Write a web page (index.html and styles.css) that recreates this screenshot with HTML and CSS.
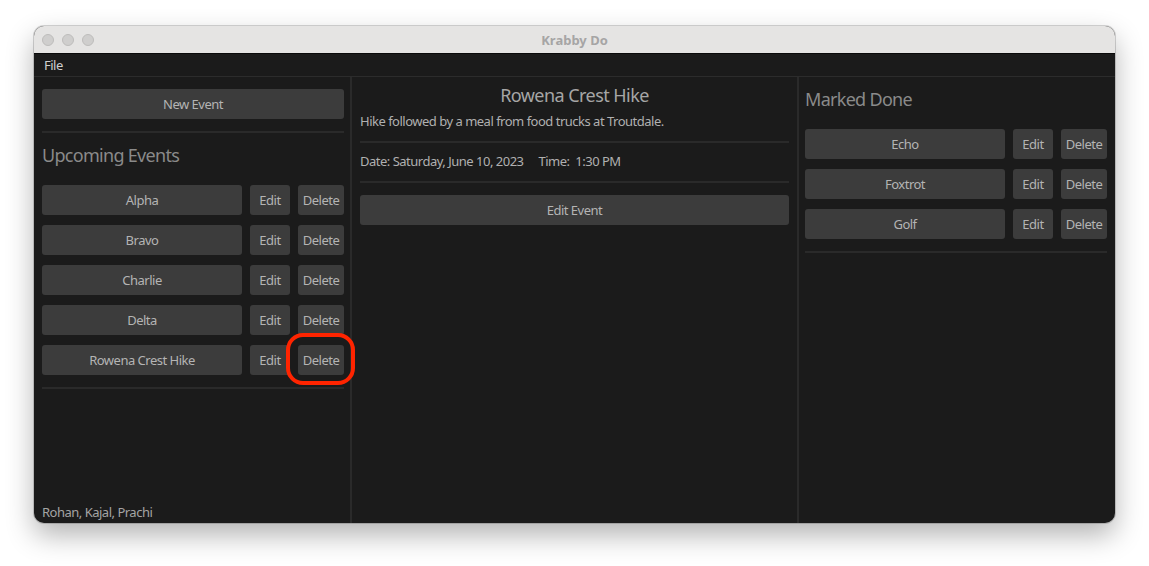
FILE: index.html
```html
<!DOCTYPE html>
<html>
<head>
<meta charset="utf-8">
<title>Krabby Do</title>
<link rel="stylesheet" href="styles.css">
</head>
<body>
<div class="window">
  <div class="titlebar">
    <div class="lights"><span class="light"></span><span class="light"></span><span class="light"></span></div>
    <div class="title">Krabby Do</div>
  </div>
  <div class="menubar"><span class="menu-item">File</span></div>
  <div class="content">
    <div class="panel left">
      <button class="btn wide">New Event</button>
      <div class="sep"></div>
      <div class="heading">Upcoming Events</div>
      <div class="rows">
        <div class="row"><button class="btn">Alpha</button><button class="btn">Edit</button><button class="btn">Delete</button></div>
        <div class="row"><button class="btn">Bravo</button><button class="btn">Edit</button><button class="btn">Delete</button></div>
        <div class="row"><button class="btn">Charlie</button><button class="btn">Edit</button><button class="btn">Delete</button></div>
        <div class="row"><button class="btn">Delta</button><button class="btn">Edit</button><button class="btn">Delete</button></div>
        <div class="row"><button class="btn">Rowena Crest Hike</button><button class="btn">Edit</button><button class="btn marked">Delete<span class="ring"></span></button></div>
      </div>
      <div class="sep"></div>
      <div class="footer">Rohan, Kajal, Prachi</div>
    </div>
    <div class="vsep"></div>
    <div class="panel middle">
      <div class="event-title">Rowena Crest Hike</div>
      <div class="desc">Hike followed by a meal from food trucks at Troutdale.</div>
      <div class="sep"></div>
      <div class="datetime"><span class="date">Date: Saturday, June 10, 2023</span><span class="time">Time:&nbsp; 1:30 PM</span></div>
      <div class="sep"></div>
      <button class="btn wide edit-event">Edit Event</button>
    </div>
    <div class="vsep"></div>
    <div class="panel right">
      <div class="heading done">Marked Done</div>
      <div class="rows">
        <div class="row"><button class="btn">Echo</button><button class="btn">Edit</button><button class="btn">Delete</button></div>
        <div class="row"><button class="btn">Foxtrot</button><button class="btn">Edit</button><button class="btn">Delete</button></div>
        <div class="row"><button class="btn">Golf</button><button class="btn">Edit</button><button class="btn">Delete</button></div>
      </div>
      <div class="sep"></div>
    </div>
  </div>
</div>
</body>
</html>
```
FILE: styles.css
```css
* { box-sizing: border-box; }
html, body { margin: 0; padding: 0; background: #ffffff; }
body {
  font-family: "Noto Sans", "Open Sans", sans-serif;
  font-size: 13px;
  letter-spacing: -0.5px;
  padding: 26px 0 43px 34px;
  min-height: 566px;
}
.window {
  width: 1081px;
  height: 497px;
  border-radius: 10px;
  overflow: hidden;
  background: #1b1b1b;
  box-shadow: 0 0 0 1px rgba(0,0,0,0.16), 0 12px 28px rgba(0,0,0,0.3);
  display: flex;
  flex-direction: column;
}
.titlebar {
  height: 28px;
  background: #e5e4e3;
  border-bottom: 1px solid #0a0a0a;
  display: flex;
  align-items: center;
  position: relative;
  flex: none;
}
.lights { display: flex; gap: 8px; padding-left: 8px; }
.light {
  width: 12px; height: 12px; border-radius: 50%;
  background: #cfcecd;
  border: 1px solid #bdbcbb;
}
.title {
  position: absolute; left: 0; right: 0; top: 0; bottom: 0;
  display: flex; align-items: center; justify-content: center;
  font-weight: bold; color: #a6a5a5; font-size: 13px; letter-spacing: 0;
}
.menubar {
  height: 23px;
  flex: none;
  background: #1b1b1b;
  border-bottom: 1px solid #2c2c2c;
  display: flex; align-items: center;
  padding-left: 10px;
}
.menu-item { color: #cfcfcf; font-size: 13px; }
.content {
  flex: 1;
  display: grid;
  grid-template-columns: 316px 2px 445px 2px 316px;
  min-height: 0;
}
.vsep { background: #2a2a2a; }
.panel { display: flex; flex-direction: column; min-height: 0; }
.left { padding: 12px 6px 3px 8px; }
.middle { padding: 6px 8px 0 8px; }
.right { padding: 10px 8px 0 6px; }
.btn {
  font-family: inherit;
  font-size: 13px;
  letter-spacing: -0.5px;
  color: #b4b4b4;
  background: #3c3c3c;
  border: none;
  border-radius: 3px;
  height: 30px;
  padding: 0;
  display: flex; align-items: center; justify-content: center;
  white-space: nowrap;
}
.wide { width: 100%; }
.sep { height: 2px; background: #2a2a2a; margin-top: 12px; flex: none; }
.heading {
  font-size: 18px;
  line-height: 24px;
  letter-spacing: -0.7px;
  color: #8a8a8a;
  margin-top: 10px;
  margin-bottom: 18px;
}
.heading.done { margin-top: 0; }
.rows { display: flex; flex-direction: column; gap: 10px; }
.row { display: grid; grid-template-columns: 200px 40px 46px; gap: 8px; }
.marked { position: relative; }
.ring {
  position: absolute;
  left: -12px; top: -12px; right: -11px; bottom: -10px;
  border: 4px solid #ff2400;
  border-radius: 17px;
  pointer-events: none;
}
.footer {
  margin-top: auto;
  color: #a4a4a4;
  line-height: 16px;
}
.event-title {
  font-size: 18px; line-height: 24px; letter-spacing: -0.55px; color: #a6a6a6; text-align: center;
}
.desc { margin-top: 6px; line-height: 16px; color: #b0b0b0; }
.datetime { margin-top: 10px; line-height: 16px; color: #b0b0b0; display: flex; }
.time { margin-left: 15px; }
.edit-event { margin-top: 12px; }
```
